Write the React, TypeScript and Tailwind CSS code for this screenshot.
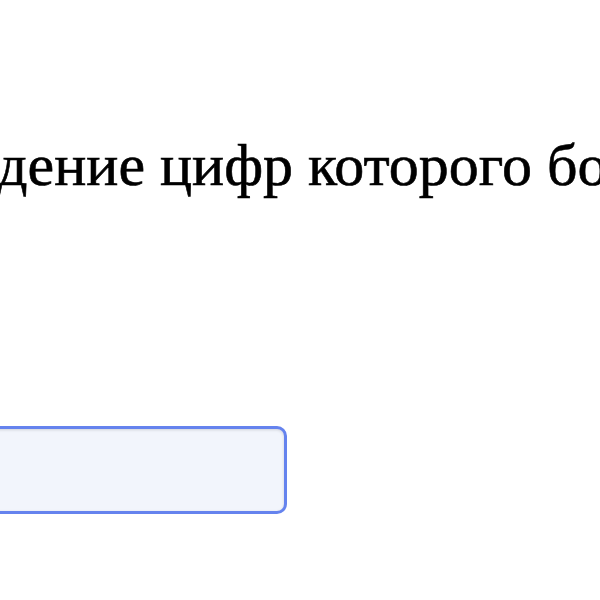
export default function App() {
  return (
    <div className="h-[600px] w-[600px] overflow-hidden bg-white">
      <div className="pt-[120px]">
        <p className="whitespace-nowrap font-['Liberation_Serif',serif] text-[60px] leading-[90px] text-black -ml-[3px] [-webkit-text-stroke:0.6px_black]">
          дение цифр которого больше
        </p>
      </div>
      <div className="mt-[216px] -ml-[20px]">
        <input
          type="text"
          className="block h-[88px] w-[307px] rounded-[10px] border-[3px] border-[#6583ee] bg-[#f2f5fc] shadow-[inset_0_1px_3px_rgba(0,0,0,0.15)] outline-none"
        />
      </div>
    </div>
  )
}
